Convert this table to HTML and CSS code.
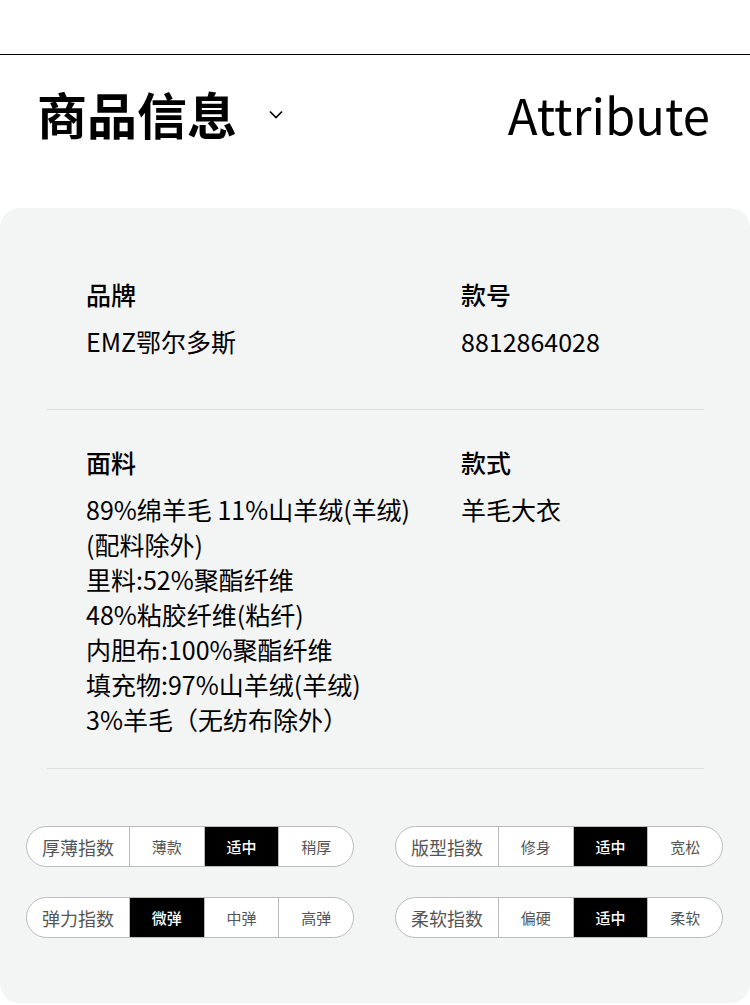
FILE: index.html
```html
<!DOCTYPE html>
<html>
<head>
<meta charset="utf-8">
<meta name="viewport" content="width=device-width, initial-scale=1.0">
<title>商品信息</title>
<link rel="stylesheet" href="styles.css">
</head>
<body>

<div class="topbar"></div>

<header class="title-bar">
	<div class="title">
		<h1>商品信息</h1>
		<svg class="chevron" width="14" height="9" viewBox="0 0 14 9"><polyline points="1,1.5 7,7.5 13,1.5" fill="none" stroke="#000" stroke-width="1.6"/></svg>
	</div>
	<div class="title-en">Attribute</div>
</header>

<section class="card">
	<div class="attr-row">
		<div class="attr">
			<div class="attr-label">品牌</div>
			<div class="attr-value">EMZ鄂尔多斯</div>
		</div>
		<div class="attr">
			<div class="attr-label">款号</div>
			<div class="attr-value">8812864028</div>
		</div>
	</div>
	<div class="attr-row">
		<div class="attr">
			<div class="attr-label">面料</div>
			<div class="attr-value">89%绵羊毛 11%山羊绒(羊绒)<br>(配料除外)<br>里料:52%聚酯纤维<br>48%粘胶纤维(粘纤)<br>内胆布:100%聚酯纤维<br>填充物:97%山羊绒(羊绒)<br>3%羊毛（无纺布除外）</div>
		</div>
		<div class="attr">
			<div class="attr-label">款式</div>
			<div class="attr-value">羊毛大衣</div>
		</div>
	</div>

	<div class="index-grid">
		<div class="pill">
			<span class="pill-label">厚薄指数</span>
			<span class="pill-opt">薄款</span>
			<span class="pill-opt active">适中</span>
			<span class="pill-opt">稍厚</span>
		</div>
		<div class="pill">
			<span class="pill-label">版型指数</span>
			<span class="pill-opt">修身</span>
			<span class="pill-opt active">适中</span>
			<span class="pill-opt">宽松</span>
		</div>
		<div class="pill">
			<span class="pill-label">弹力指数</span>
			<span class="pill-opt active">微弹</span>
			<span class="pill-opt">中弹</span>
			<span class="pill-opt">高弹</span>
		</div>
		<div class="pill">
			<span class="pill-label">柔软指数</span>
			<span class="pill-opt">偏硬</span>
			<span class="pill-opt active">适中</span>
			<span class="pill-opt">柔软</span>
		</div>
	</div>
</section>

</body>
</html>
```

FILE: styles.css
```css
* {
	margin: 0;
	padding: 0;
	box-sizing: border-box;
}
body {
	width: 750px;
	background: #fff;
	color: #000;
	font-family: "Noto Sans CJK SC", "Noto Sans", sans-serif;
}
.topbar {
	height: 55px;
	border-bottom: 1px solid #000;
}
.title-bar {
	display: flex;
	justify-content: space-between;
	align-items: center;
	padding: 28px 40px 65px 37px;
	height: 153px;
}
.title {
	display: flex;
	align-items: center;
}
.title h1 {
	font-size: 50px;
	font-weight: 700;
	line-height: 60px;
}
.chevron {
	margin-left: 32px;
	margin-top: 3px;
}
.title-en {
	font-size: 49px;
	font-weight: 400;
	line-height: 60px;
	margin-top: 2px;
}
.card {
	background: #f3f4f4;
	border-radius: 20px;
	padding-top: 33px;
	height: 795px;
}
.attr-row {
	display: flex;
	margin: 0 46px 0 47px;
	padding: 35px 0 31px 39px;
	border-bottom: 1px solid #dddddd;
}
.attr-row:first-child {
	padding-top: 36px;
	padding-bottom: 50px;
}
.attr {
	flex: 1;
}
.attr:first-child {
	flex: 0 0 375px;
}
.attr-label {
	font-size: 25px;
	font-weight: 500;
	line-height: 34px;
}
.attr-value {
	margin-top: 13px;
	font-size: 25px;
	line-height: 35px;
}
.index-grid {
	display: grid;
	grid-template-columns: 1fr 1fr;
	column-gap: 41px;
	row-gap: 30px;
	padding: 57px 27px 0 26px;
}
.pill {
	display: flex;
	height: 41px;
	border: 1px solid #bbbbbb;
	border-radius: 21px;
	overflow: hidden;
	background: #fff;
}
.pill-label {
	flex: 0 0 102px;
	display: flex;
	align-items: center;
	justify-content: center;
	font-size: 18px;
	color: #555;
}
.pill-opt {
	flex: 1;
	display: flex;
	align-items: center;
	justify-content: center;
	border-left: 1px solid #bbbbbb;
	font-size: 15px;
	color: #555;
}
.pill-opt.active {
	background: #000;
	color: #fff;
	font-weight: 500;
}
```
